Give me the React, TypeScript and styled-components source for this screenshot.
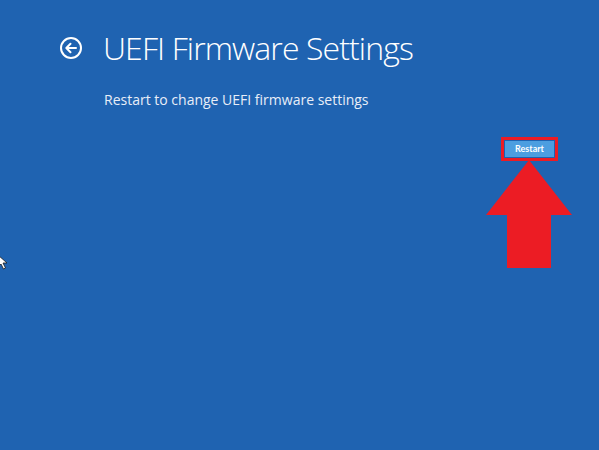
import styled, { createGlobalStyle } from 'styled-components';

const GlobalStyle = createGlobalStyle`
    html, body {
        margin: 0;
        padding: 0;
        background: #1f63b1;
        overflow: hidden;
    }
`;

const Screen = styled.div`
    position: relative;
    width: 599px;
    height: 450px;
    background: #1f63b1;
    color: #ffffff;
    font-family: "Open Sans", "Segoe UI", sans-serif;
    box-sizing: border-box;
    padding: 28px 0 0 0;
`;

const Header = styled.div`
    display: flex;
    align-items: center;
    padding-left: 59px;
    gap: 20px;
    height: 40px;
`;

const BackButton = styled.div`
    width: 24px;
    height: 24px;
    display: flex;
    align-items: center;
    justify-content: center;
`;

const Title = styled.h1`
    margin: 0;
    font-size: 32px;
    font-weight: 300;
    letter-spacing: -0.9px;
    line-height: 40px;
`;

const Subtitle = styled.p`
    margin: 22px 0 0 104px;
    font-size: 14px;
    font-weight: 400;
    line-height: 20px;
    color: #e8eef8;
`;

const ActionRow = styled.div`
    display: flex;
    justify-content: flex-end;
    padding-right: 45px;
    margin-top: 31px;
`;

const RestartButton = styled.button`
    position: relative;
    width: 49px;
    height: 16px;
    padding: 0;
    border: none;
    background: #4c9ee0;
    color: #ffffff;
    font-family: "Lato", "Open Sans", sans-serif;
    font-size: 9px;
    font-weight: 700;
    line-height: 16px;
`;

const Highlight = styled.div`
    position: absolute;
    left: -4px;
    top: -4px;
    right: -4px;
    bottom: -4px;
    border: 3px solid #ec1c24;
    box-sizing: border-box;
    pointer-events: none;
`;

const Arrow = styled.svg`
    position: absolute;
    left: 485px;
    top: 159px;
`;

const Cursor = styled.svg`
    position: absolute;
    left: -3px;
    top: 254px;
`;

function BackIcon() {
    return (
        <svg width="24" height="24" viewBox="0 0 24 24">
            <circle cx="12" cy="12" r="10" fill="none" stroke="#ffffff" strokeWidth="2" />
            <path d="M7.5 12 H17 M11.5 7.8 L7.3 12 L11.5 16.2" fill="none" stroke="#ffffff" strokeWidth="2" strokeLinecap="round" strokeLinejoin="round" />
        </svg>
    );
}

export default function App() {
    return (
        <>
            <GlobalStyle />
            <Screen>
                <Header>
                    <BackButton><BackIcon /></BackButton>
                    <Title>UEFI Firmware Settings</Title>
                </Header>
                <Subtitle>Restart to change UEFI firmware settings</Subtitle>
                <ActionRow>
                    <RestartButton>
                        Restart
                        <Highlight />
                    </RestartButton>
                </ActionRow>
                <Arrow width="88" height="110" viewBox="0 0 88 110">
                    <polygon points="44,1 87,56 66,56 66,109 22,109 22,56 1,56" fill="#ec1c24" />
                </Arrow>
                <Cursor width="12" height="16" viewBox="0 0 12 16">
                    <path d="M1 1 L1 13 L4 10 L6.5 15 L8.5 14 L6 9 L10 9 Z" fill="#ffffff" stroke="#1a1a1a" strokeWidth="0.8" />
                </Cursor>
            </Screen>
        </>
    );
}
